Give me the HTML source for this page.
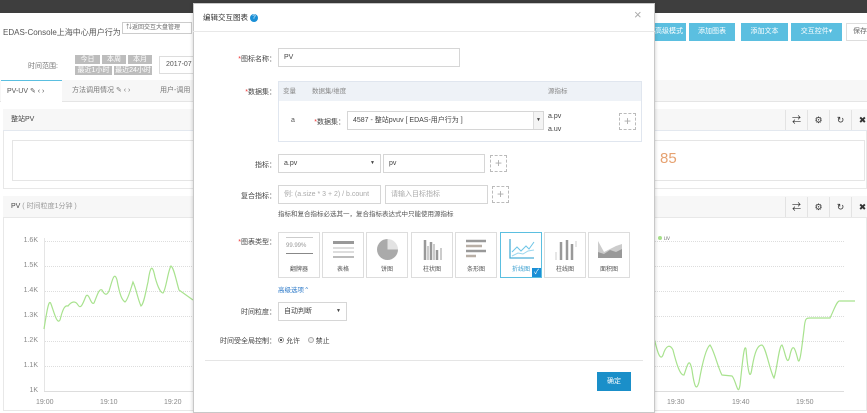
<!DOCTYPE html>
<html><head><meta charset="utf-8"><style>
*{box-sizing:border-box;margin:0;padding:0}
body{width:867px;height:411px;overflow:hidden;position:relative;background:#fff;font-family:"Liberation Sans","Noto Sans CJK SC",sans-serif;font-size:7px;color:#555}
.a{position:absolute}
.top{left:0;top:0;width:867px;height:13px;background:#3e3e3e}
.btn{background:#5bbfe0;color:#fff;font-size:7px;text-align:center;line-height:17px;height:18px;top:23px}
.tag{background:#bdbdbd;color:#fff;font-size:7px;line-height:9px;text-align:center;height:9px}
.inp{border:1px solid #d6d6d6;background:#fff;font-size:7px;line-height:17px;padding-left:5px;color:#444}
.lbl{font-size:7px;color:#444;text-align:right}
.lbl b{color:#e33;font-weight:normal}
.plus{border:1px dashed #bbb;width:17px;height:17px;color:#aaa;font-size:12px;line-height:15px;text-align:center}
.card{top:232px;width:42px;height:46px;border:1px solid #ddd;background:#fff}
.card span{position:absolute;bottom:4px;left:0;width:100%;text-align:center;font-size:6px;color:#555}
.ib{width:22px;height:20px;border-left:1px solid #e3e3e3;text-align:center;line-height:20px;font-size:9px;color:#333}
.grid{border-top:1px dotted #ddd;left:44px;width:800px;height:0}
.yl{left:20px;font-size:7px;color:#888;width:18px;text-align:right}
</style></head><body>
<div class="a top"></div>
<div class="a" style="left:3px;top:27px;font-size:8px;color:#555">EDAS-Console上海中心用户行为</div>
<div class="a" style="left:122px;top:22px;width:70px;height:12px;border:1px solid #ccc;font-size:6px;line-height:10px;padding-left:3px;color:#666">⇅返回交互大盘管理</div>
<div class="a btn" style="left:652px;width:34px">高级模式</div>
<div class="a btn" style="left:689px;width:46px">添加图表</div>
<div class="a btn" style="left:741px;width:47px">添加文本</div>
<div class="a btn" style="left:791px;width:51px">交互控件▾</div>
<div class="a" style="left:846px;top:23px;width:22px;height:18px;border:1px solid #ddd;font-size:7px;line-height:16px;padding-left:6px;color:#666">保存</div>
<div class="a" style="left:28px;top:61px;font-size:7px;color:#777">时间范围:</div>
<div class="a tag" style="left:75px;top:55px;width:25px">今日</div>
<div class="a tag" style="left:102px;top:55px;width:24px">本周</div>
<div class="a tag" style="left:128px;top:55px;width:24px">本月</div>
<div class="a tag" style="left:75px;top:66px;width:37px">最近1小时</div>
<div class="a tag" style="left:114px;top:66px;width:38px">最近24小时</div>
<div class="a" style="left:159px;top:56px;width:40px;height:18px;border:1px solid #ddd;font-size:7px;line-height:16px;padding-left:6px">2017-07</div>
<div class="a" style="left:0;top:80px;width:867px;height:22px;background:#f7f7f7;border-bottom:1px solid #e5e5e5"></div>
<div class="a" style="left:1px;top:80px;width:61px;height:23px;background:#fff;border-top:1px solid #5bbfe0;font-size:7px;line-height:21px;padding-left:6px">PV-UV ✎ ‹ ›</div>
<div class="a" style="left:72px;top:80px;font-size:7px;line-height:22px;color:#777">方法调用情况 ✎ ‹ ›</div>
<div class="a" style="left:160px;top:80px;font-size:7px;line-height:22px;color:#777">用户-调用</div>
<div class="a" style="left:3px;top:109px;width:864px;height:80px;border:1px solid #e8e8e8"></div>
<div class="a" style="left:3px;top:109px;width:864px;height:22px;background:#f7f7f7;border-bottom:1px solid #e3e8ef;font-size:7px;line-height:22px;padding-left:8px;color:#444">整站PV</div>
<div class="a ib" style="left:785px;top:110px">⇄</div><div class="a ib" style="left:807px;top:110px">⚙</div><div class="a ib" style="left:829px;top:110px">↻</div><div class="a ib" style="left:851px;top:110px">✖</div>
<div class="a" style="left:12px;top:140px;width:853px;height:41px;border:1px solid #e5e5e5"></div>
<div class="a" style="left:660px;top:150px;font-size:15px;color:#e6a271">85</div>
<div class="a" style="left:3px;top:196px;width:864px;height:215px;border:1px solid #e8e8e8"></div>
<div class="a" style="left:3px;top:196px;width:864px;height:22px;background:#f7f7f7;border-bottom:1px solid #e8e8e8;font-size:7px;line-height:22px;padding-left:8px;color:#444">PV <span style="color:#999">( 时间粒度1分钟 )</span></div>
<div class="a ib" style="left:785px;top:197px">⇄</div><div class="a ib" style="left:807px;top:197px">⚙</div><div class="a ib" style="left:829px;top:197px">↻</div><div class="a ib" style="left:851px;top:197px">✖</div>
<div class="a grid" style="top:241px"></div><div class="a grid" style="top:266px"></div><div class="a grid" style="top:291px"></div><div class="a grid" style="top:316px"></div><div class="a grid" style="top:341px"></div><div class="a grid" style="top:366px"></div><div class="a" style="left:44px;top:391px;width:800px;border-top:1px solid #ddd"></div>
<div class="a" style="left:44px;top:238px;height:153px;border-left:1px solid #e5e5e5"></div>
<div class="a yl" style="top:237px">1.6K</div><div class="a yl" style="top:262px">1.5K</div><div class="a yl" style="top:287px">1.4K</div><div class="a yl" style="top:312px">1.3K</div><div class="a yl" style="top:337px">1.2K</div><div class="a yl" style="top:362px">1.1K</div><div class="a yl" style="top:387px">1K</div>
<div class="a" style="left:36px;top:399px;font-size:7px;color:#888">19:00</div><div class="a" style="left:100px;top:399px;font-size:7px;color:#888">19:10</div><div class="a" style="left:164px;top:399px;font-size:7px;color:#888">19:20</div>
<div class="a" style="left:667px;top:399px;font-size:7px;color:#888">19:30</div><div class="a" style="left:732px;top:399px;font-size:7px;color:#888">19:40</div><div class="a" style="left:796px;top:399px;font-size:7px;color:#888">19:50</div>
<div class="a" style="left:658px;top:236px;font-size:6px;color:#888"><span style="display:inline-block;width:4px;height:4px;border-radius:2px;background:#a6e08a"></span> uv</div>
<svg class="a" style="left:0;top:0" width="867" height="411"><path fill="none" stroke="#a8e28e" stroke-width="1.2" d="M44 329 C47 310 49 298 51 304 C54 312 57 325 60 320 C63 308 65 305 68 306 C71 302 75 300 78 305 C81 310 83 303 86 296 C89 292 91 306 94 303 C97 296 99 288 102 290 C105 296 107 295 109 291 C112 282 114 270 117 280 C120 296 122 300 125 302 C128 300 131 288 133 282 C136 288 138 300 141 306 C144 304 146 290 148 282 C150 268 152 262 155 277 C158 288 161 293 163 293 C166 290 168 270 171 266 C174 268 176 280 179 290 L193 300"/><path fill="none" stroke="#a8e28e" stroke-width="1.2" d="M654 338 C657 350 660 362 663 355 C666 345 670 344 673 350 C676 362 680 376 684 375 C687 367 689 355 692 370 C694 384 696 393 699 382 C702 365 706 348 710 345 C714 350 718 368 722 375 L732 376 C736 380 738 398 740 385 C742 368 744 342 746 349 C748 372 750 382 752 368 C755 350 758 345 762 345 C766 347 770 372 774 378 C777 370 779 345 782 345 C785 350 787 370 790 355 C793 342 795 348 798 360 C800 366 802 345 804 330 C805 318 806 318 810 318 L830 318 C834 310 837 300 840 301 L855 301"/></svg>
<!-- modal -->
<div class="a" style="left:193px;top:3px;width:462px;height:410px;background:#fff;border:1px solid #c8c8c8;box-shadow:0 0 4px rgba(0,0,0,.2)"></div>
<div class="a" style="left:193px;top:31px;width:462px;border-top:1px solid #e8e8e8"></div>
<div class="a" style="left:203px;top:12px;font-size:7.5px;color:#333">编辑交互图表 <span style="display:inline-block;width:8px;height:8px;border-radius:4px;background:#1a8fd6;color:#fff;font-size:6px;line-height:8px;text-align:center;vertical-align:middle">?</span></div>
<div class="a" style="left:634px;top:7px;font-size:13px;color:#aaa">×</div>
<div class="a lbl" style="left:220px;top:54px;width:56px"><b>*</b>图标名称：</div>
<div class="a inp" style="left:278px;top:48px;width:182px;height:19px">PV</div>
<div class="a lbl" style="left:220px;top:87px;width:56px"><b>*</b>数据集：</div>
<div class="a" style="left:278px;top:81px;width:364px;height:61px;border:1px solid #e0e6ef"></div>
<div class="a" style="left:279px;top:82px;width:362px;height:19px;background:#eef2f7;font-size:6.5px;line-height:19px;color:#888"><span style="margin-left:4px">变量</span><span style="margin-left:16px">数据集/维度</span><span style="position:absolute;left:269px">源指标</span></div>
<div class="a" style="left:291px;top:117px;font-size:7px">a</div>
<div class="a lbl" style="left:312px;top:117px;width:33px"><b>*</b>数据集：</div>
<div class="a inp" style="left:347px;top:111px;width:197px;height:19px">4587 - 整站pvuv [ EDAS-用户行为 ]<span style="position:absolute;right:0;top:0;width:10px;height:17px;border-left:1px solid #ddd;background:#f4f4f4;font-size:5px;text-align:center">▼</span></div>
<div class="a" style="left:548px;top:113px;font-size:7px;color:#444">a.pv</div>
<div class="a" style="left:548px;top:126px;font-size:7px;color:#444">a.uv</div>
<div class="a plus" style="left:619px;top:113px">+</div>
<div class="a lbl" style="left:220px;top:160px;width:56px">指标：</div>
<div class="a inp" style="left:278px;top:154px;width:103px;height:19px">a.pv<span style="position:absolute;right:5px;font-size:5px">▼</span></div>
<div class="a inp" style="left:383px;top:154px;width:102px;height:19px">pv</div>
<div class="a plus" style="left:490px;top:155px">+</div>
<div class="a lbl" style="left:220px;top:191px;width:56px">复合指标：</div>
<div class="a inp" style="left:278px;top:185px;width:103px;height:19px;color:#aaa">例: (a.size * 3 + 2) / b.count</div>
<div class="a inp" style="left:385px;top:185px;width:103px;height:19px;color:#aaa">请输入目标指标</div>
<div class="a plus" style="left:492px;top:186px">+</div>
<div class="a" style="left:278px;top:208px;font-size:6.5px;color:#555">指标和复合指标必选其一，复合指标表达式中只能使用源指标</div>
<div class="a lbl" style="left:220px;top:237px;width:56px"><b>*</b>图表类型：</div>
<div class="a card" style="left:278px"><div class="a" style="left:7px;top:4px;width:27px;border-top:1px solid #ccc"></div><div class="a" style="left:7px;top:10px;font-size:6px;color:#999">99.99%</div><div class="a" style="left:7px;top:20px;width:27px;border-top:1px solid #888"></div><span>翻牌器</span></div>
<div class="a card" style="left:322px"><div class="a" style="left:10px;top:8px;width:21px;height:3px;background:#999"></div><div class="a" style="left:10px;top:14px;width:21px;height:2px;background:#ddd"></div><div class="a" style="left:10px;top:18px;width:21px;height:2px;background:#ddd"></div><div class="a" style="left:10px;top:23px;width:21px;height:2px;background:#bbb"></div><span>表格</span></div>
<div class="a card" style="left:366px"><div class="a" style="left:10px;top:6px;width:21px;height:21px;border-radius:50%;background:conic-gradient(#e3e3e3 0 25%,#aaa 25%)"></div><span>饼图</span></div>
<div class="a card" style="left:411px"><svg class="a" style="left:10px;top:5px" width="22" height="22"><g stroke="#999" stroke-width="2.5"><path d="M3 2V22M9 4V22M15 12V22"/></g><g stroke="#ccc" stroke-width="2"><path d="M6 8V22M12 6V22M19 10V22"/></g></svg><span>柱状图</span></div>
<div class="a card" style="left:455px"><svg class="a" style="left:10px;top:6px" width="22" height="20"><g stroke-width="2.5"><path d="M0 2H20" stroke="#999"/><path d="M0 7H16" stroke="#b8afa6"/><path d="M0 12H20" stroke="#999"/><path d="M0 17H10" stroke="#b8afa6"/></g></svg><span>条形图</span></div>
<div class="a card" style="left:500px;border-color:#5bbfe0"><svg class="a" style="left:8px;top:5px" width="26" height="22"><path d="M1 1V20H25" fill="none" stroke="#4aaed6" stroke-width="1.3"/><path d="M3 14L8 9L12 13L17 8L20 11L25 4" fill="none" stroke="#6cc4e6" stroke-width="1"/><path d="M3 18L9 15L14 16L19 13L25 12" fill="none" stroke="#9ad6ee" stroke-width="1"/></svg><span style="color:#3a9fd0">折线图</span><div class="a" style="right:0;bottom:0;width:9px;height:9px;background:#1a8fd6;color:#fff;font-size:7px;line-height:9px;text-align:center">✓</div></div>
<div class="a card" style="left:544px"><svg class="a" style="left:10px;top:5px" width="22" height="22"><g stroke="#999" stroke-width="2.5"><path d="M6 4V22M12 2V22M17 6V22"/></g><path d="M1 14V22M21 3V9" stroke="#ccc" stroke-width="1"/></svg><span>柱线图</span></div>
<div class="a card" style="left:588px"><svg class="a" style="left:8px;top:5px" width="26" height="22"><path d="M1 20V3L7 14L13 11L19 8L25 6V20Z" fill="#ccc"/><path d="M1 20V14L7 16L13 12L19 14L25 11V20Z" fill="#999"/></svg><span>面积图</span></div>
<div class="a" style="left:278px;top:284px;font-size:6.5px;color:#2a78c8">高级选项⌃</div>
<div class="a lbl" style="left:220px;top:307px;width:56px">时间粒度：</div>
<div class="a inp" style="left:278px;top:302px;width:69px;height:19px">自动判断<span style="position:absolute;right:5px;font-size:5px">▼</span></div>
<div class="a lbl" style="left:200px;top:336px;width:76px">时间受全局控制：</div>
<div class="a" style="left:278px;top:336px;font-size:7px;color:#444"><span style="display:inline-block;width:6px;height:6px;border:1px solid #999;border-radius:50%;background:radial-gradient(#555 40%,#fff 45%)"></span> 允许 &nbsp;&nbsp;&nbsp;<span style="display:inline-block;width:6px;height:6px;border:1px solid #aaa;border-radius:50%;background:#eee"></span> 禁止</div>
<div class="a" style="left:205px;top:360px;width:438px;border-top:1px solid #e5e5e5"></div>
<div class="a" style="left:597px;top:372px;width:34px;height:19px;background:#1a8fc9;color:#fff;font-size:7px;line-height:19px;text-align:center">确定</div>
</body></html>
